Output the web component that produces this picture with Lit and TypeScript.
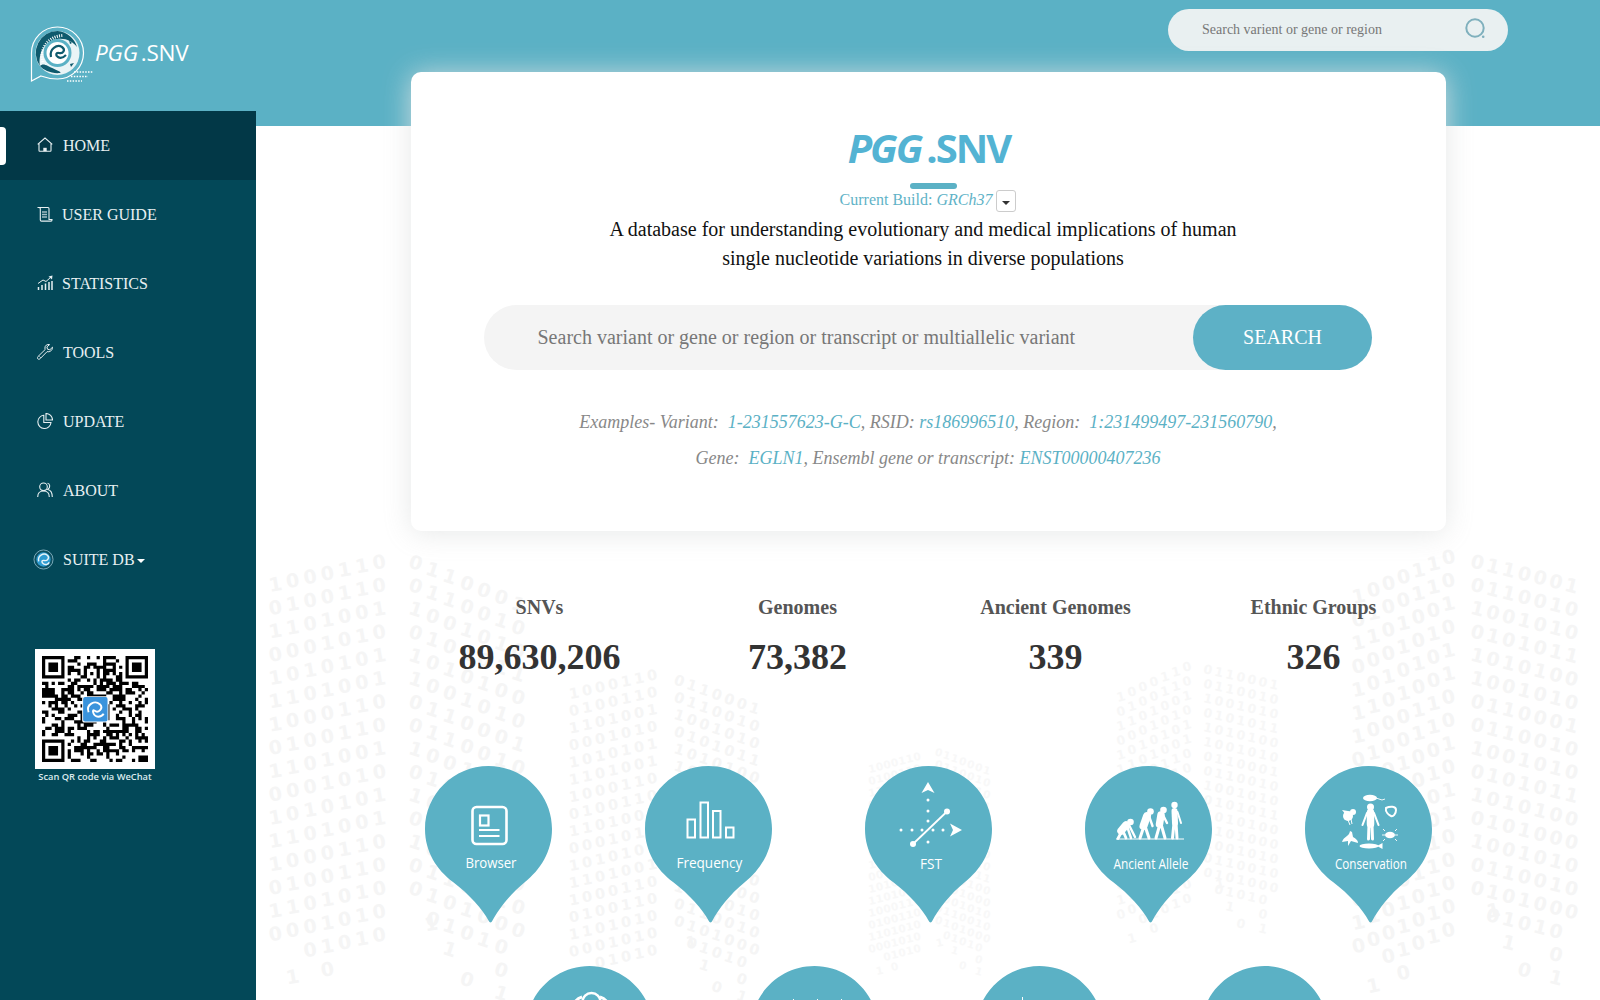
import { LitElement, html, svg, css } from "lit";
import { customElement } from "lit/decorators.js";

const LEFT_ROWS = ["1000110","0100110","1101001","0001010","1010101","1101001","1000110","0100110","1101001","0001010","1010101","1101001","1000110","0100110","1101010","0001010","  01010  1"," 1 0"];
const RIGHT_ROWS = ["0110001","0110010","1001010","0101011","1010100","1001010","0110001","0110010","1001010","0101011","1010100","0101000","1001010","0110010","0101000"," 01010","  1  0","   0 1"];

function wing(x0: number, y0: number, dx: number, dy: number, pitch: number, rows: string[], size: number, rot: number, color: string) {
  return rows.map((row, r) => {
    const xs: string[] = [], ys: string[] = [];
    let txt = "";
    [...row].forEach((c, i) => {
      if (c === " ") return;
      txt += c;
      xs.push((x0 + i * dx).toFixed(1));
      ys.push((y0 + r * pitch + i * dy).toFixed(1));
    });
    return svg`<text x=${xs.join(" ")} y=${ys.join(" ")} rotate=${rot} font-size=${size} fill=${color} text-anchor="middle" font-weight="700" font-family="DejaVu Sans, sans-serif">${txt}</text>`;
  });
}

function qrPath() {
  const n = 33;
  let seed = 48271;
  const rnd = () => (seed = (seed * 16807) % 2147483647) / 2147483647;
  let d = "";
  const inFinder = (x: number, y: number) => (x < 8 && y < 8) || (x >= n - 8 && y < 8) || (x < 8 && y >= n - 8);
  for (let y = 0; y < n; y++) for (let x = 0; x < n; x++) {
    if (inFinder(x, y)) continue;
    if (rnd() > 0.5) d += `M${x} ${y}h1v1h-1z`;
  }
  const finder = (x: number, y: number) => `M${x} ${y}h7v7h-7zM${x + 1} ${y + 1}v5h5v-5zM${x + 2} ${y + 2}h3v3h-3z`;
  return d + finder(0, 0) + finder(n - 7, 0) + finder(0, n - 7);
}

const PIN = "M63.5 0C98 0 127 28 127 63C127 86 115 104 100 116C85 128 73 144 67.5 154.5Q65.5 158.5 63.500 154.5C58 144 44 128 28 116C12 104 0 86 0 63C0 28 29 0 63.5 0Z";

const limb = (pts: string, w: number) => svg`<path d=${pts} stroke="#fff" stroke-width=${w} stroke-linecap="round" fill="none"/>`;

const browserIcon = svg`
  <rect x="47.5" y="41" width="34" height="37" rx="4" fill="none" stroke="#fff" stroke-width="2.6"/>
  <rect x="55" y="49.5" width="8.5" height="10" fill="none" stroke="#fff" stroke-width="2.200"/>
  <path d="M54 64h20.5M54 70h20.5" stroke="#fff" stroke-width="2.200" fill="none"/>`;

const freqIcon = svg`<g fill="none" stroke="#fff" stroke-width="2">
  <rect x="42.5" y="53.5" width="7.5" height="18"/><rect x="55.5" y="36.5" width="7.5" height="35"/>
  <rect x="68" y="45" width="7.5" height="26.5"/><rect x="81" y="61.5" width="7.5" height="10"/></g>`;

const fstIcon = svg`<g fill="#fff">
  <path d="M63 16l6.500 11-6.500-3-6.500 3z"/><path d="M97 64l-12 6.500 3-6.500-3-6.500z"/>
  ${[34, 45, 55, 76].map((y) => svg`<circle cx="63" cy=${y} r="1.500"/>`)}
  ${[36, 47, 57, 68, 78].map((x) => svg`<circle cx=${x} cy="64" r="1.500"/>`)}
  <circle cx="48" cy="78" r="3"/><circle cx="82" cy="45.500" r="3"/></g>
  <path d="M48 78L82 45.500" stroke="#fff" stroke-width="1.800"/>`;

const ancientIcon = svg`<g fill="#fff">
  <circle cx="45.500" cy="56" r="3.300"/><circle cx="65.500" cy="45.500" r="3.300"/><circle cx="78.500" cy="44" r="3.300"/><circle cx="89.500" cy="39" r="3.200"/></g>
  ${limb("M41 59L36 65", 7.500)}${limb("M37 65L33 72.500M38 65L41 72", 2.800)}${limb("M44 59L50 71M42 60L46 72", 2.400)}
  ${limb("M62 50L58.500 60", 8)}${limb("M59 60L55 72M60 60L64 72", 3)}${limb("M64 50L67.500 60", 2.400)}
  ${limb("M76 49L74.500 58", 7.500)}${limb("M75 58L71 72M76 58L80 72", 3)}${limb("M78 49L82 57", 2.400)}
  ${limb("M89.500 45L90 57", 6)}${limb("M89 57L87.500 72M91 57L92 72", 3)}${limb("M92.500 46L96 57", 2)}
  <path d="M31 73h68" stroke="#fff" stroke-width="1.200"/>`;

const conservationIcon = svg`<g fill="#fff">
  <circle cx="65.500" cy="41" r="3.500"/>
  <ellipse cx="65" cy="32" rx="7" ry="3.300"/><ellipse cx="85" cy="69" rx="5" ry="3.300"/>
  <ellipse cx="64" cy="80" rx="9.500" ry="2.400"/><path d="M72 80l5.500-3v6z"/>
  <circle cx="43" cy="50" r="5"/><circle cx="48" cy="46" r="3"/><path d="M37 44l6 1-2 4z"/><path d="M43 54l2 5M46 53l1 5" stroke="#fff" stroke-width="1"/>
  <path d="M37 76c2-6 7-5 8-11l2 1 1 5c3 2 5 3 5 6l-7-2-3 5 0-5z"/></g>
  ${limb("M65.500 46.500L65.500 58", 7.500)}${limb("M64 58L63.500 73M67 58L67.500 73", 3)}${limb("M62 47L57.500 59M69 47L73.500 59", 2.100)}
  <path d="M71 32l6 2 3-1M80 65l-2-2M90 65l2-2M80 73l-2 2M90 73l2 2M80 69h-3M90 69h3" stroke="#fff" stroke-width="0.900" fill="none"/>
  <path d="M81 42c4-2 10-2 10 2s-3 7-5 6-6-4-5-8z" fill="none" stroke="#fff" stroke-width="2"/>`;

const ring2 = svg`<path d="M46 46C47 36 52 32 56 31M84 46C83 36 78 32 74 31" stroke="#fff" stroke-width="3" fill="none"/><circle cx="65.500" cy="36" r="9" fill="none" stroke="#fff" stroke-width="2.500"/>`;
const ticks3 = svg`<path d="M42.500 33v10M66.500 33v10M90.500 33v10" stroke="#fff" stroke-width="1" fill="none"/>`;
const tick1 = svg`<path d="M46.500 31v12" stroke="#fff" stroke-width="1" fill="none"/>`;

function pin(icon: unknown, label?: string, width?: number, lx = 66, ly = 102.5) {
  return html`<svg class="pin" viewBox="0 0 127 158" width="127" height="158" aria-hidden=${label ? "false" : "true"}>
    <path d=${PIN} fill="#5bb1c5"/>${icon}
    ${label ? svg`<text x=${lx} y=${ly} text-anchor="middle" fill="#fff" font-size="14.500" font-family="Open Sans, sans-serif" textLength=${width!} lengthAdjust="spacingAndGlyphs">${label}</text>` : ""}
  </svg>`;
}

const NAV = [
  { label: "HOME", active: true, cls: "", icon: svg`<path d="M.7 7.300 8 1l7.300 6.300M2 6.200v7.400c0 .4.300.7.700.7h10.600c.4 0 .7-.3.700-.7V6.200" fill="none" stroke="currentColor" stroke-width="1.100"/><rect x="6.300" y="10.800" width="3.400" height="3.400" fill="currentColor"/>` },
  { label: "USER GUIDE", active: false, cls: "tight", icon: svg`<path d="M.5 1.500h10.500c.8 0 1 .5 1 1.200v10.800H15v.6c0 .6-.4 1-1 1H4.500c-.7 0-1.200-.4-1.200-1.200V2.700C3.300 1.800 2.500 1.500 1.800 1.500" fill="none" stroke="currentColor" stroke-width="1.100"/><path d="M5 6h5M5 8.500h5M5 11h5" stroke="currentColor" stroke-width="1.500" opacity=".7"/>` },
  { label: "STATISTICS", active: false, cls: "tight", icon: svg`<path d="M1.500 15v-3M5 15v-5M8.500 15V8.500M12 15V7M15 15V6" stroke="currentColor" stroke-width="1.500" fill="none"/><path d="M1 8.500 6 5l3 1.500L14 2" stroke="currentColor" stroke-width="1" fill="none"/><path d="M11.500 1.500 15.500.5l-.5 4z" fill="currentColor"/>` },
  { label: "TOOLS", active: false, cls: "", icon: svg`<path d="M15.500 3.200 12.800 5.800 10.500 5.200 9.900 2.900 12.600.6C10.200-.2 7.800 1.600 7.900 4.100c0 .5.100 1 .3 1.400L1 12.500c-.8.800-.8 1.700-.2 2.300.6.600 1.600.6 2.300-.1l7-7.100c2.700.9 5.600-1.400 5.400-4.400zM2.500 12.500l1.200 1.200" fill="none" stroke="currentColor" stroke-width="1"/>` },
  { label: "UPDATE", active: false, cls: "", icon: svg`<path d="M6.800 2.300a6.600 6.600 0 1 0 7.200 7.200H6.800z" fill="none" stroke="currentColor" stroke-width="1.100"/><path d="M9 .5a6.500 6.500 0 0 1 6.500 6.500H9z" fill="none" stroke="currentColor" stroke-width="1.100"/>` },
  { label: "ABOUT", active: false, cls: "", icon: svg`<circle cx="6.500" cy="4.800" r="3.800" fill="none" stroke="currentColor" stroke-width="1.100"/><path d="M.7 15c0-3.800 2.400-6 5.800-6s5.800 2.200 5.800 6M10.500 1.200c2.600.3 3.200 4.600.3 6.300 2.900.7 4.500 3.500 4.500 7.500" fill="none" stroke="currentColor" stroke-width="1.100"/>` },
];

@customElement("app-root")
export class AppRoot extends LitElement {
  static styles = css`
    :host { display: block; width: 1600px; height: 1000px; overflow: hidden; background: #fff; font-family: "Liberation Serif", serif; }
    .top { height: 126px; background: #5bb1c5; display: flex; justify-content: space-between; align-items: flex-start; }
    .brand { display: flex; align-items: flex-start; margin: 26px 0 0 30px; }
    .brand svg { display: block; }
    .brand-name { font: 400 22.500px/1 "Open Sans", sans-serif; letter-spacing: -.2px; color: #fff; margin: 16px 0 0 1px; white-space: nowrap; }
    .brand-name i { font-style: italic; margin-right: 3px; }
    .top-search { width: 340px; height: 42px; margin: 9px 92px 0 0; box-sizing: border-box; padding: 0 22px 2px 34px; border-radius: 21px; background: #e9f0f1; display: flex; align-items: center; }
    .top-search input { flex: 1; min-width: 0; border: 0; outline: 0; background: none; font: 14px "Liberation Serif", serif; padding: 0; color: #666; margin-top: 1px; }
    .top-search input::placeholder { color: #777; opacity: 1; }
    .layout { display: flex; }
    .side { width: 256px; height: 889px; margin-top: -15px; background: #034858; color: #e8f0f2; flex: none; }
    .nav-item { position: relative; height: 69px; display: flex; align-items: center; padding-left: 37px; font-size: 16px; }
    .nav-item svg { width: 16px; height: 16px; margin: -2px 10px 0 0; flex: none; }
    .nav-item.tight svg { margin-right: 9px; }
    .nav-item.active { background: #023847; }
    .nav-item.active::before { content: ""; position: absolute; left: 0; top: 16px; width: 6px; height: 38px; background: #fff; border-radius: 0 4px 4px 0; }
    .nav-item svg.suite { width: 21px; height: 21px; margin: 0 9px 0 -4px; }
    .caret { width: 0; height: 0; border: 4.500px solid transparent; border-top-color: #fff; border-bottom: 0; margin-left: 2px; margin-top: 2px; }
    .qr { margin: 55px 0 0 35px; width: 120px; }
    .qr-box { width: 120px; height: 120px; background: #fff; display: flex; align-items: center; justify-content: center; }
    .qr-box svg { display: block; }
    .qr-cap { font: 600 9.300px/1 "Open Sans", sans-serif; color: #dcebee; text-align: center; margin-top: 3px; white-space: nowrap; }
    .main { position: relative; flex: 1; min-width: 0; height: 874px; }
    .digits { position: absolute; left: 0; top: 0; }
    .content { position: relative; }
    .card { margin: -54px 0 0 155px; width: 1035px; height: 459px; box-sizing: border-box; padding-top: 46px; background: #fff; border-radius: 10px; box-shadow: 0 2px 28px rgba(226, 228, 228, .85); }
    .logo-big { height: 60px; font: 700 40px/60px "Open Sans", sans-serif; color: #53b3d3; text-align: center; letter-spacing: -2px; padding-left: 1px; white-space: nowrap; }
    .logo-big i { font-style: italic; margin-right: 5px; }
    .bar { width: 47px; height: 6px; border-radius: 3px; background: #5bb1c5; margin: 5px 0 0 499px; }
    .build { height: 22px; margin-top: 1px; padding-right: 1px; display: flex; justify-content: center; align-items: center; color: #5fb3c7; font-size: 16px; }
    .build-text { margin-top: -2px; }
    .build i { margin-left: 4px; }
    .build-btn { width: 20px; height: 22px; box-sizing: border-box; margin-left: 4px; padding: 0; border: 1px solid #ccc; border-radius: 3px; background: #fff; display: flex; align-items: center; justify-content: center; }
    .build-btn span { width: 0; height: 0; border: 4px solid transparent; border-top-color: #333; border-bottom: 0; margin-top: 3px; }
    .lead { margin: 3px 0 0; padding-right: 11px; font-size: 20px; line-height: 29px; text-align: center; color: #111; }
    .search { margin: 32px 0 0 73px; width: 888px; height: 65px; border-radius: 32.500px; background: #f4f4f4; display: flex; }
    .search input { flex: 1; min-width: 0; border: 0; outline: 0; background: none; padding: 0 0 0 53.500px; font: 20px "Liberation Serif", serif; }
    .search input::placeholder { color: #777; opacity: 1; }
    .search button { width: 179px; border: 0; border-radius: 32.500px; background: #5db1c6; color: #fff; font: 20px "Liberation Serif", serif; padding: 0; }
    .examples { margin: 34px 0 0; padding-right: 1px; font-size: 18px; font-style: italic; line-height: 36px; text-align: center; color: #888; white-space: pre; }
    .examples a { color: #5bb1c5; text-decoration: none; }
    .stats { display: grid; grid-template-columns: repeat(4, 258px); margin: 62px 0 0 154.500px; text-align: center; }
    .stat-label { font-size: 20px; font-weight: 700; line-height: 28px; color: #555; }
    .stat-num { font-size: 36px; font-weight: 700; line-height: 50px; margin-top: 11px; color: #333; }
    .pins { display: flex; }
    .pin { display: block; flex: none; }
    .row1 { gap: 93px; margin: 84px 0 0 169px; }
    .row2 { gap: 98px; margin: 42px 0 0 269.500px; }
  `;

  render() {
    const c = "#f5f5f5";
    return html`
      <header class="top">
        <div class="brand">
          <svg viewBox="0 0 64 57" width="64" height="57" aria-hidden="true">
            <path d="M1.500 55V27A26 26 0 1 1 27.500 53C20 53 15 51.500 11 50Z" fill="none" stroke="#fff" stroke-width="1.200"/>
            <circle cx="27.500" cy="27" r="22" fill="#eaf4f6"/>
            <path d="M27.500 5A22 22 0 0 0 10 40C8 28 14 15 27 13C36 12 42 15 47 21A22 22 0 0 0 27.500 5Z" fill="#0f5a6d"/>
            <path d="M13 36C9 22 19 10 33 9.500" fill="none" stroke="#fff" stroke-width="3" stroke-dasharray="1 1.300"/>
            <path d="M10 40C13 44 22 48 30 47C33 46.500 24 43 18 40C14 38 12 38 10 40Z" fill="#0f5a6d"/>
            <circle cx="27.500" cy="27" r="14" fill="#5bb1c5"/>
            <circle cx="27.500" cy="27" r="11" fill="#fff"/>
            <path d="M21 31C19 23 27 18 32 21C36 24 33 28 29 27C26 26.500 25 29 28 31C31 33 34 31 36 29" fill="none" stroke="#0f5a6d" stroke-width="2.200"/>
            <path d="M39 14l3 3-2 1zM44 37l-3 4-1-3zM22 44l4 1-3 1z" fill="#0f5a6d"/>
            <path d="M44 46h19M41 50.500h17M37 55h15" stroke="#fff" stroke-width="1.300" stroke-dasharray="1.500 1.300" fill="none"/>
          </svg>
          <div class="brand-name"><i>PGG</i>.SNV</div>
        </div>
        <div class="top-search">
          <input placeholder="Search varient or gene or region" aria-label="Search" />
          <svg viewBox="0 0 21 22" width="21" height="22" aria-hidden="true">
            <circle cx="10" cy="10" r="8.700" fill="none" stroke="#7fb0bd" stroke-width="2"/>
            <circle cx="18.200" cy="18.700" r="1.300" fill="#7fb0bd"/>
          </svg>
        </div>
      </header>
      <div class="layout">
        <nav class="side">
          ${NAV.map((n) => html`<div class="nav-item ${n.active ? "active" : ""} ${n.cls}"><svg viewBox="0 0 16 16" aria-hidden="true">${n.icon}</svg>${n.label}</div>`)}
          <div class="nav-item">
            <svg class="suite" viewBox="0 0 22 22" aria-hidden="true">
              <circle cx="11" cy="11" r="10" fill="#0d4f60" stroke="#9cc4d2" stroke-width=".8"/>
              <circle cx="11" cy="11" r="7.500" fill="#2e9bd0"/>
              <path d="M6 13C4.500 7 11 3.500 15 6.500C18 9 15 13 11.500 12C9 11.400 8.500 14 11 15.500C13.500 17 16 16 17 14" fill="none" stroke="#e8f4f8" stroke-width="1.500"/>
            </svg>
            SUITE DB<span class="caret"></span>
          </div>
          <div class="qr">
            <div class="qr-box">
              <svg viewBox="0 0 33 33" width="106" height="106" aria-hidden="true">
                <path d=${qrPath()} fill="#000" fill-rule="evenodd"/>
                <rect x="12.500" y="12.500" width="8.200" height="8.200" rx=".8" fill="#fff"/>
                <rect x="12.800" y="12.800" width="7.600" height="7.600" rx=".6" fill="#3a93dc"/>
                <path d="M14.500 17.500C13.600 15 16.500 13.700 18 15C19.300 16.300 17.500 18 16.300 17C15.500 16.300 15.800 18.800 17.500 18.900C18.300 18.900 18.900 18.500 19.200 18" fill="none" stroke="#fff" stroke-width=".6"/>
              </svg>
            </div>
            <div class="qr-cap">Scan QR code via WeChat</div>
          </div>
        </nav>
        <main class="main">
          <svg class="digits" width="1344" height="874" viewBox="256 126 1344 874" aria-hidden="true">
            ${wing(276.7, 592, 17.3, -3.7, 23.3, LEFT_ROWS, 19, -10, c)}
            ${wing(414, 567, 17.1, 6.9, 23.3, RIGHT_ROWS, 19, 18, c)}
            ${wing(1360, 604, 15, -6.5, 23.3, LEFT_ROWS, 19, -12, c)}
            ${wing(1476, 567, 15.7, 3.9, 23.3, RIGHT_ROWS, 19, 14, c)}
            ${wing(575, 699, 13, -3, 17.2, LEFT_ROWS, 14.5, -10, c)}
            ${wing(678, 684, 12.5, 4.6, 17.2, RIGHT_ROWS, 14.5, 18, c)}
            ${wing(873, 773, 7.5, -2, 12, LEFT_ROWS, 10.5, -12, "#f8f8f8")}
            ${wing(938, 755, 8, 3, 12, RIGHT_ROWS, 10.5, 16, "#f8f8f8")}
            ${wing(1122, 702, 11, -5, 14.5, LEFT_ROWS, 12.5, -14, "#f7f7f7")}
            ${wing(1207, 673, 11, 2.5, 14.5, RIGHT_ROWS, 12.5, 12, "#f7f7f7")}
          </svg>
          <div class="content">
            <section class="card">
              <div class="logo-big"><i>PGG</i>.SNV</div>
              <div class="bar"></div>
              <div class="build"><span class="build-text">Current Build:<i>GRCh37</i></span><button class="build-btn" aria-label="Choose build"><span></span></button></div>
              <p class="lead">A database for understanding evolutionary and medical implications of human<br />single nucleotide variations in diverse populations</p>
              <div class="search">
                <input placeholder="Search variant or gene or region or transcript or multiallelic variant" aria-label="Search variant" />
                <button>SEARCH</button>
              </div>
              <div class="examples">Examples- Variant:  <a>1-231557623-G-C</a>, RSID: <a>rs186996510</a>, Region:  <a>1:231499497-231560790</a>,
Gene:  <a>EGLN1</a>, Ensembl gene or transcript: <a>ENST00000407236</a></div>
            </section>
            <section class="stats">
              <div><div class="stat-label">SNVs</div><div class="stat-num">89,630,206</div></div>
              <div><div class="stat-label">Genomes</div><div class="stat-num">73,382</div></div>
              <div><div class="stat-label">Ancient Genomes</div><div class="stat-num">339</div></div>
              <div><div class="stat-label">Ethnic Groups</div><div class="stat-num">326</div></div>
            </section>
            <div class="pins row1">
              ${pin(browserIcon, "Browser", 51, 66, 101.5)}
              ${pin(freqIcon, "Frequency", 66, 64.4, 101.5)}
              ${pin(fstIcon, "FST", 22)}
              ${pin(ancientIcon, "Ancient Allele", 75)}
              ${pin(conservationIcon, "Conservation", 72)}
            </div>
            <div class="pins row2">
              ${pin(ring2)}${pin(ticks3)}${pin(tick1)}${pin("")}
            </div>
          </div>
        </main>
      </div>
    `;
  }
}
